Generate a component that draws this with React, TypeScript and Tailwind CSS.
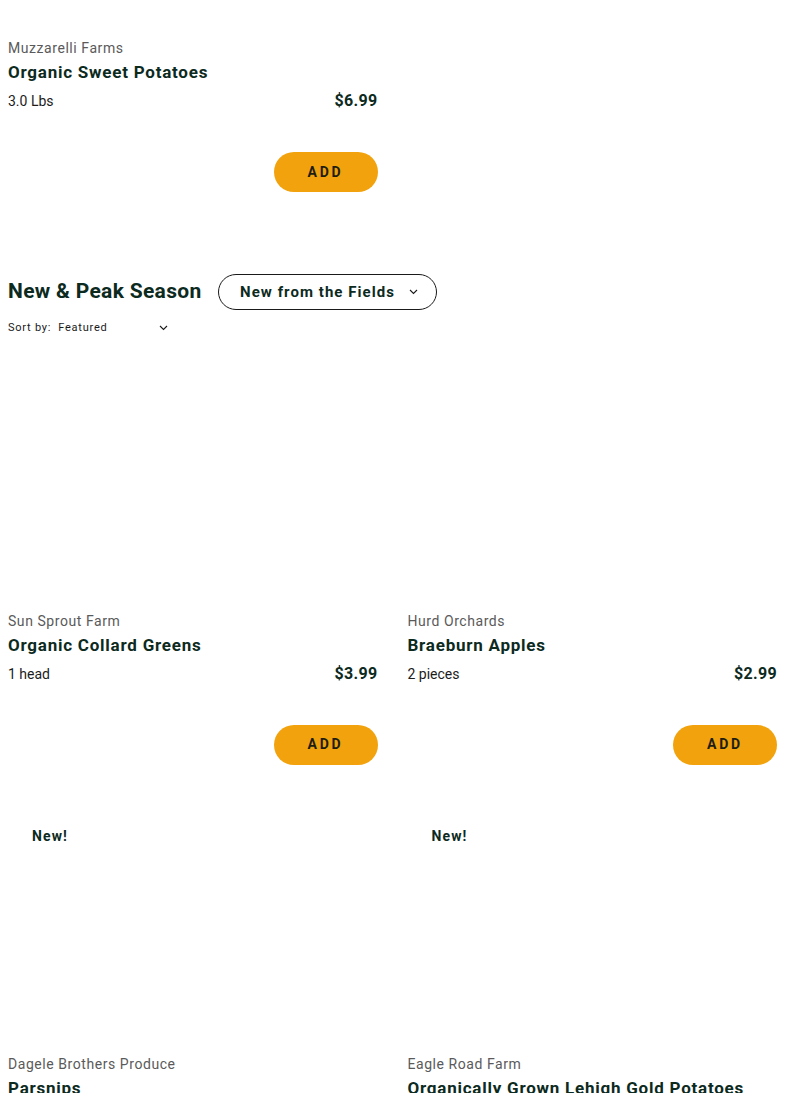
import React from "react";

type Product = {
  vendor: string;
  name: string;
  unit?: string;
  price?: string;
  isNew?: boolean;
};

const font = { fontFamily: "Roboto, 'Open Sans', Arial, sans-serif" };

const ProductCard = ({ p, showImage = true }: { p: Product; showImage?: boolean }) => (
  <div className="flex flex-col">
    {showImage && (
      <div className="relative h-[253px] bg-white">
        {p.isNew && (
          <span className="absolute top-[28px] left-[16px] bg-white px-2 py-[1px] text-[14px] font-bold tracking-[0.08em] text-[#0c2a1e]">
            New!
          </span>
        )}
      </div>
    )}
    <div className="mt-[4px] text-[14px] leading-[20px] tracking-[0.04em] text-[#5a5a5a]">{p.vendor}</div>
    <div className="mt-[4px] text-[17px] leading-[20px] font-bold tracking-[0.045em] text-[#0c2a1e]">{p.name}</div>
    {p.unit && (
      <>
        <div className="mt-[9px] flex items-center justify-between">
          <span className="text-[14px] leading-[20px] text-[#1c1c1c]">{p.unit}</span>
          <span className="text-[16px] leading-[20px] font-bold tracking-[0.02em] text-[#0c2a1e]">{p.price}</span>
        </div>
        <div className="mt-[41px] flex justify-end">
          <button className="h-[40px] w-[104px] rounded-full bg-[#f2a20c] text-[14px] font-bold tracking-[0.2em] text-[#1d1d12]">
            ADD
          </button>
        </div>
      </>
    )}
  </div>
);

const Chevron = () => (
  <svg width="9" height="6" viewBox="0 0 9 6" fill="none">
    <path d="M1 1l3.5 3.5L8 1" stroke="#1a1a1a" strokeWidth="1.1" />
  </svg>
);

export default function App() {
  return (
    <div className="min-h-screen bg-white px-2" style={font}>
      {/* Previous section tail */}
      <div className="grid grid-cols-2 gap-x-[30px] pt-[34px]">
        <ProductCard
          showImage={false}
          p={{ vendor: "Muzzarelli Farms", name: "Organic Sweet Potatoes", unit: "3.0 Lbs", price: "$6.99" }}
        />
        <div />
      </div>

      {/* Section header */}
      <div className="mt-[82px] flex items-center gap-4">
        <h2 className="text-[21px] font-bold tracking-[0.015em] text-[#0c2a1e]">New &amp; Peak Season</h2>
        <button className="flex h-[36px] w-[219px] items-center justify-center gap-[14px] rounded-full border border-[#1a1a1a] pl-[4px] text-[15px] font-bold tracking-[0.07em] text-[#0c2a1e]">
          New from the Fields
          <Chevron />
        </button>
      </div>
      <div className="mt-[10px] flex w-[160px] items-center justify-between text-[11px] tracking-[0.07em] text-[#1a1a1a]">
        <span>Sort by:&nbsp; Featured</span>
        <Chevron />
      </div>

      <div className="mt-[17px] grid grid-cols-2 gap-x-[30px] gap-y-[32px]">
        <ProductCard p={{ vendor: "Sun Sprout Farm", name: "Organic Collard Greens", unit: "1 head", price: "$3.99" }} />
        <ProductCard p={{ vendor: "Hurd Orchards", name: "Braeburn Apples", unit: "2 pieces", price: "$2.99" }} />
        <ProductCard p={{ vendor: "Dagele Brothers Produce", name: "Parsnips", isNew: true }} />
        <ProductCard p={{ vendor: "Eagle Road Farm", name: "Organically Grown Lehigh Gold Potatoes", isNew: true }} />
      </div>
    </div>
  );
}
